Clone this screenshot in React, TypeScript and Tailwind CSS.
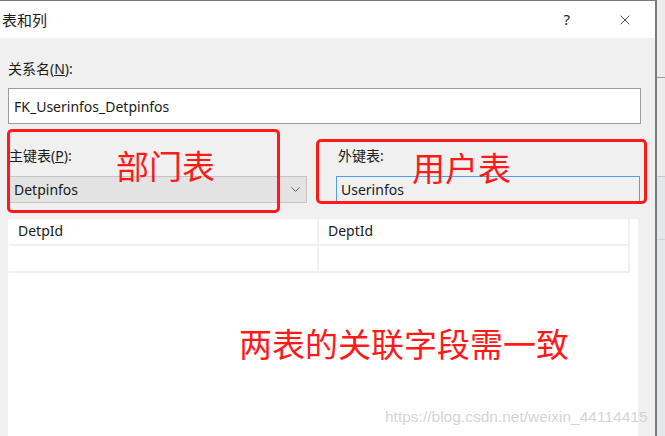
import { ChevronDown, X } from 'lucide-react'

const ui = { fontFamily: '"Noto Sans", "Noto Sans CJK SC", sans-serif' }
const cjk = { fontFamily: '"Noto Sans CJK SC", sans-serif' }

export default function App() {
  return (
    <div className="relative flex w-[665px] h-[436px] overflow-hidden bg-[#f0f0f0] text-[#1a1a1a]" style={ui}>
      {/* Dialog */}
      <div className="flex flex-col w-[657px] h-full border-t border-r-2 border-[#7a7a7a]">
        {/* Title bar */}
        <div className="flex items-center h-[37px] bg-white">
          <span className="pl-[2px] text-[15px] leading-none" style={cjk}>表和列</span>
          <span className="ml-auto text-[15px] leading-none text-[#222]">?</span>
          <X className="ml-[47px] mr-[22px] w-[16px] h-[16px] text-[#222]" strokeWidth={1.2} />
        </div>

        {/* Body */}
        <div className="flex flex-col flex-1 px-[8px]">
          <div className="mt-[22px] h-[18px] text-[14px] leading-[18px]">
            关系名(<span className="underline">N</span>):
          </div>
          <div className="mt-[10px] flex items-center w-[633px] h-[36px] bg-white border border-[#9c9c9c] pl-[5px] text-[14px]">
            FK_Userinfos_Detpinfos
          </div>

          <div className="flex mt-[22px] h-[57px]">
            <div className="flex flex-col w-[298px] ml-[1px]">
              <div className="h-[20px] text-[14px] leading-[20px]">
                主键表(<span className="underline">P</span>):
              </div>
              <div className="mt-[10px] flex items-center h-[30px] bg-[#e3e3e3] border border-[#c4c4c4] pl-[4px] text-[14px]">
                Detpinfos
                <ChevronDown className="ml-auto mr-[3px] w-[15px] h-[15px] text-[#4a4a4a]" strokeWidth={1.4} />
              </div>
            </div>
            <div className="flex flex-col w-[304px] ml-[29px]">
              <div className="h-[20px] pl-[2px] text-[14px] leading-[20px]">外键表:</div>
              <div className="mt-[10px] flex items-center h-[30px] bg-[#f0f0f0] border border-[#4ea1e6] pl-[4px] text-[14px]">
                Userinfos
              </div>
            </div>
          </div>

          {/* Columns grid */}
          <div className="flex flex-col flex-1 w-[630px] mt-[16px] bg-white pl-[1px]">
            <div className="grid grid-cols-[310px_311px] w-[621px]">
              <div className="h-[27px] flex items-center pl-[9px] pb-[3px] text-[14px] border-r-2 border-b-2 border-[#f0f0f0]">DetpId</div>
              <div className="h-[27px] flex items-center pl-[9px] pb-[3px] text-[14px] border-r-2 border-b-2 border-[#f0f0f0]">DeptId</div>
              <div className="h-[27px] border-r-2 border-b-2 border-[#f0f0f0]"></div>
              <div className="h-[27px] border-r-2 border-b-2 border-[#f0f0f0]"></div>
            </div>
          </div>
        </div>
      </div>

      {/* Background window peeking at the right */}
      <div className="flex flex-col flex-1 bg-[#ececec]">
        <div className="h-[78px] border-b border-[#9a9a9a]"></div>
        <div className="h-[99px] border-b border-[#c8c8c8]"></div>
        <div className="h-[63px] border-b border-[#d4d4d4] bg-[#e4e6ea]"></div>
        <div className="flex-1 bg-[#e6e7eb]"></div>
      </div>

      {/* Annotations */}
      <div className="absolute left-[7px] top-[129px] w-[273px] h-[84px] border-[3px] border-[#ff1a1a] rounded-[5px]"></div>
      <div className="absolute left-[316px] top-[139px] w-[331px] h-[65px] border-[3px] border-[#ff1a1a] rounded-[5px]"></div>
      <div className="absolute left-[116px] top-[143px] text-[33px] leading-[44px] text-[#ff1a1a]" style={cjk}>部门表</div>
      <div className="absolute left-[412px] top-[145px] text-[33px] leading-[44px] text-[#ff1a1a]" style={cjk}>用户表</div>
      <div className="absolute left-[239px] top-[321px] text-[33px] leading-[44px] text-[#ff1a1a]" style={cjk}>两表的关联字段需一致</div>
      <div
        className="absolute left-[385px] top-[406px] whitespace-nowrap text-[15.5px] leading-[22px] text-[#d4d4d4]"
        style={{ fontFamily: '"Liberation Sans", Arial, sans-serif' }}
      >
        https://blog.csdn.net/weixin_44114415
      </div>
    </div>
  )
}
